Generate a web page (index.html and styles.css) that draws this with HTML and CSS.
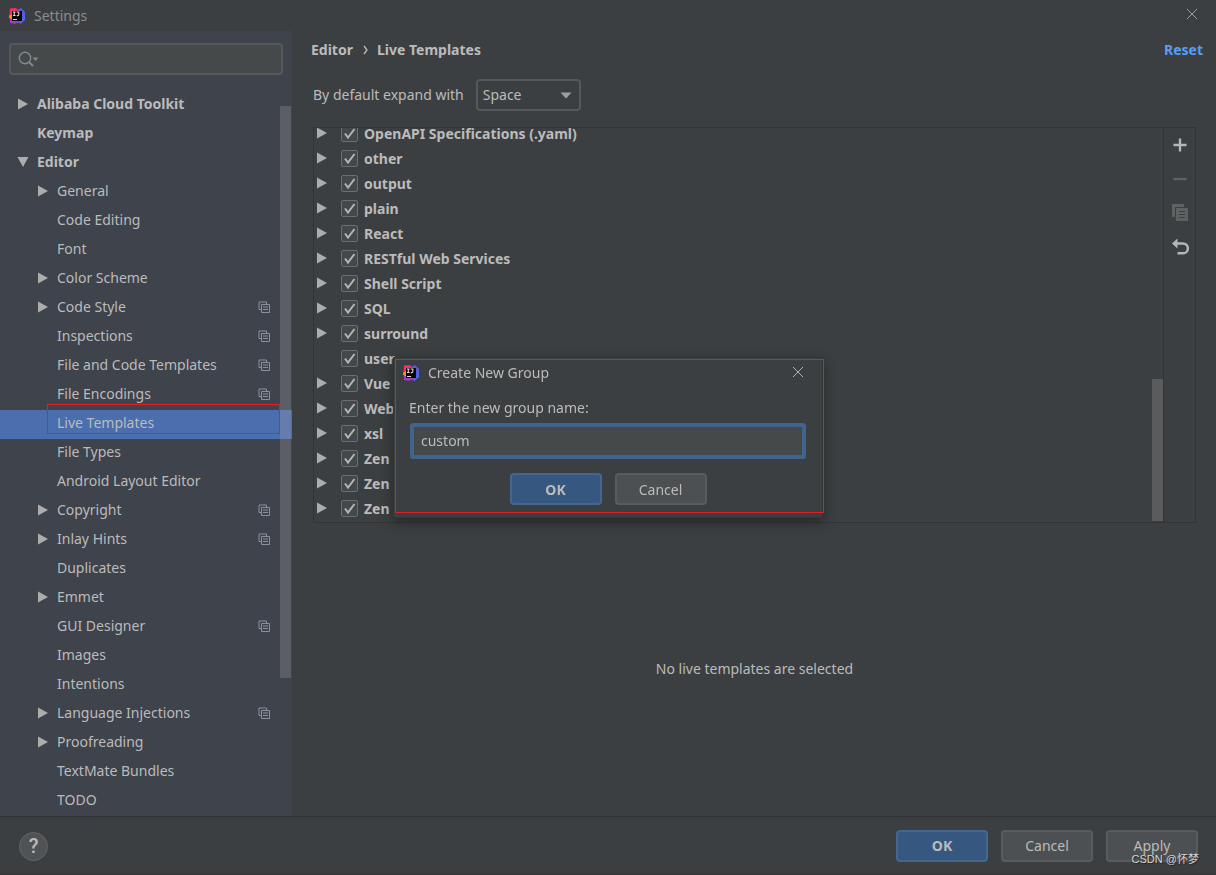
FILE: index.html
```html
<!DOCTYPE html>
<html lang="en">
<head>
<meta charset="utf-8">
<title>Settings</title>
<link rel="stylesheet" href="styles.css">
</head>
<body>
<svg class="sprite" aria-hidden="true">
  <defs>
    <linearGradient id="g-red" x1="0" y1="0" x2="1" y2="1"><stop offset="0" stop-color="#ff2f63"/><stop offset="1" stop-color="#e0218a"/></linearGradient>
    <linearGradient id="g-blue" x1="0" y1="0" x2="1" y2="1"><stop offset="0" stop-color="#3b6cf0"/><stop offset=".5" stop-color="#6a4fd8"/><stop offset="1" stop-color="#2f7bf5"/></linearGradient>
  </defs>
  <symbol id="logo" viewBox="0 0 16 16">
    <path d="M8 2.500 12 0l4 4v8l-4.500 4L7 13z" fill="url(#g-blue)"/>
    <path d="M1.200 10 .8 15l5 .8 6-1.800L6 8z" fill="#a23bc0"/>
    <path d="M1 .5 7 0l4 4-5 6H2L.6 6z" fill="url(#g-red)"/>
    <path d="M0 7.500 3 6v5.500L.2 10z" fill="#fb8b1a"/>
    <path d="M3 3h10v10H3z" fill="#050505"/>
    <path d="M4 4h2.600M5.300 4v3.600M4 7.500h2.600M7.600 4h2.200v2.700q0 .9-1 .9h-1" fill="none" stroke="#ddd" stroke-width="1.100"/>
    <path d="M4 11h4v1H4z" fill="#ddd"/>
  </symbol>
  <symbol id="close" viewBox="0 0 12 12"><path d="M1 1l10 10M11 1 1 11" fill="none" stroke="currentColor"/></symbol>
  <symbol id="right" viewBox="0 0 12 12"><path d="M1 .5v11L11 6z" fill="currentColor"/></symbol>
  <symbol id="down" viewBox="0 0 12 12"><path d="M.5 1h11L6 11z" fill="currentColor"/></symbol>
  <symbol id="copy" viewBox="0 0 12 12"><path d="M3 8.500H1V1h7.500v2" fill="none" stroke="currentColor"/><path d="M3.500 3.500h8v8h-8zM5 6h5M5 8.500h5" fill="none" stroke="currentColor"/></symbol>
</svg>

<div class="window">
  <header class="titlebar">
    <svg class="logo"><use href="#logo"/></svg>
    <h1 class="titlebar-text">Settings</h1>
    <button class="close" aria-label="Close settings"><svg><use href="#close"/></svg></button>
  </header>

  <div class="body">
    <aside class="sidebar">
      <div class="search">
        <svg viewBox="0 0 22 16" aria-hidden="true"><circle cx="7" cy="7" r="5.700" fill="none" stroke="currentColor" stroke-width="1.400"/><path d="m11 11 4 4" stroke="currentColor" stroke-width="1.800"/><path d="M14.500 6.500h6l-3 3.500z" fill="currentColor"/></svg>
        <input type="text" aria-label="Search settings">
      </div>
      <ul class="tree">
        <li class="row top"><svg class="arrow"><use href="#right"/></svg>Alibaba Cloud Toolkit</li>
        <li class="row top"><span class="arrow"></span>Keymap</li>
        <li class="row top"><svg class="arrow"><use href="#down"/></svg>Editor</li>
        <li class="row"><svg class="arrow"><use href="#right"/></svg>General</li>
        <li class="row"><span class="arrow"></span>Code Editing</li>
        <li class="row"><span class="arrow"></span>Font</li>
        <li class="row"><svg class="arrow"><use href="#right"/></svg>Color Scheme</li>
        <li class="row"><svg class="arrow"><use href="#right"/></svg>Code Style<svg class="scope"><use href="#copy"/></svg></li>
        <li class="row"><span class="arrow"></span>Inspections<svg class="scope"><use href="#copy"/></svg></li>
        <li class="row"><span class="arrow"></span>File and Code Templates<svg class="scope"><use href="#copy"/></svg></li>
        <li class="row"><span class="arrow"></span>File Encodings<svg class="scope"><use href="#copy"/></svg></li>
        <li class="row selected"><span class="arrow"></span>Live Templates<span class="highlight"></span></li>
        <li class="row"><span class="arrow"></span>File Types</li>
        <li class="row"><span class="arrow"></span>Android Layout Editor</li>
        <li class="row"><svg class="arrow"><use href="#right"/></svg>Copyright<svg class="scope"><use href="#copy"/></svg></li>
        <li class="row"><svg class="arrow"><use href="#right"/></svg>Inlay Hints<svg class="scope"><use href="#copy"/></svg></li>
        <li class="row"><span class="arrow"></span>Duplicates</li>
        <li class="row"><svg class="arrow"><use href="#right"/></svg>Emmet</li>
        <li class="row"><span class="arrow"></span>GUI Designer<svg class="scope"><use href="#copy"/></svg></li>
        <li class="row"><span class="arrow"></span>Images</li>
        <li class="row"><span class="arrow"></span>Intentions</li>
        <li class="row"><svg class="arrow"><use href="#right"/></svg>Language Injections<svg class="scope"><use href="#copy"/></svg></li>
        <li class="row"><svg class="arrow"><use href="#right"/></svg>Proofreading</li>
        <li class="row"><span class="arrow"></span>TextMate Bundles</li>
        <li class="row"><span class="arrow"></span>TODO</li>
      </ul>
      <div class="thumb side-thumb"></div>
    </aside>

    <main class="main">
      <div class="crumbs">
        <span>Editor</span>
        <svg class="crumb-sep" viewBox="0 0 6 10" aria-hidden="true"><path d="m2 1 3 4-3 4" fill="none" stroke="currentColor" stroke-width="1.300"/></svg>
        <span>Live Templates</span>
        <a class="reset" href="#">Reset</a>
      </div>
      <div class="expand">
        <label for="expand">By default expand with</label>
        <div class="select">
          <select id="expand"><option>Space</option><option>Tab</option><option>Enter</option></select>
          <svg viewBox="0 0 12 7" aria-hidden="true"><path d="M.5.500h11L6 6.500z" fill="currentColor"/></svg>
        </div>
      </div>
      <section class="templates">
        <div class="list">
          <ul class="groups">
            <li class="group"><svg class="arrow"><use href="#right"/></svg><label><input type="checkbox" checked>OpenAPI Specifications (.yaml)</label></li>
            <li class="group"><svg class="arrow"><use href="#right"/></svg><label><input type="checkbox" checked>other</label></li>
            <li class="group"><svg class="arrow"><use href="#right"/></svg><label><input type="checkbox" checked>output</label></li>
            <li class="group"><svg class="arrow"><use href="#right"/></svg><label><input type="checkbox" checked>plain</label></li>
            <li class="group"><svg class="arrow"><use href="#right"/></svg><label><input type="checkbox" checked>React</label></li>
            <li class="group"><svg class="arrow"><use href="#right"/></svg><label><input type="checkbox" checked>RESTful Web Services</label></li>
            <li class="group"><svg class="arrow"><use href="#right"/></svg><label><input type="checkbox" checked>Shell Script</label></li>
            <li class="group"><svg class="arrow"><use href="#right"/></svg><label><input type="checkbox" checked>SQL</label></li>
            <li class="group"><svg class="arrow"><use href="#right"/></svg><label><input type="checkbox" checked>surround</label></li>
            <li class="group"><span class="arrow"></span><label><input type="checkbox" checked>user</label></li>
            <li class="group"><svg class="arrow"><use href="#right"/></svg><label><input type="checkbox" checked>Vue</label></li>
            <li class="group"><svg class="arrow"><use href="#right"/></svg><label><input type="checkbox" checked>Web</label></li>
            <li class="group"><svg class="arrow"><use href="#right"/></svg><label><input type="checkbox" checked>xsl</label></li>
            <li class="group"><svg class="arrow"><use href="#right"/></svg><label><input type="checkbox" checked>Zen</label></li>
            <li class="group"><svg class="arrow"><use href="#right"/></svg><label><input type="checkbox" checked>Zen</label></li>
            <li class="group"><svg class="arrow"><use href="#right"/></svg><label><input type="checkbox" checked>Zen</label></li>
          </ul>
          <div class="thumb list-thumb"></div>
        </div>
        <div class="tools">
          <button aria-label="Add"><svg viewBox="0 0 18 18"><path d="M9 2.500v13M2.500 9h13" stroke="currentColor" stroke-width="2.400"/></svg></button>
          <button aria-label="Remove" disabled><svg viewBox="0 0 18 18"><path d="M2.500 9h13" stroke="currentColor" stroke-width="2.400"/></svg></button>
          <button aria-label="Duplicate" disabled><svg viewBox="0 0 18 18"><path d="M1 0h12v3H4v10H1z" fill="currentColor"/><path d="M5 4h12v13H5z" fill="currentColor"/><path d="M8 7.500h6M8 10.500h6M8 13.500h6" stroke="#3c3f41"/></svg></button>
          <button aria-label="Restore defaults"><svg viewBox="0 0 18 18"><path d="M5 5.500h7a4.900 4.900 0 0 1 0 9.800H6.500" fill="none" stroke="currentColor" stroke-width="2.500"/><path d="M1 5.500 6.500.500v10z" fill="currentColor"/></svg></button>
        </div>
      </section>
      <p class="empty">No live templates are selected</p>
    </main>
  </div>

  <footer class="footer">
    <button class="help" aria-label="Help">?</button>
    <div class="actions">
      <button class="btn primary">OK</button>
      <button class="btn">Cancel</button>
      <button class="btn">Apply</button>
    </div>
    <span class="watermark">CSDN @怀梦</span>
  </footer>
</div>

<div class="dialog" role="dialog" aria-labelledby="dialog-title">
  <div class="dialog-head">
    <svg class="logo"><use href="#logo"/></svg>
    <h2 id="dialog-title" class="dialog-title">Create New Group</h2>
    <button class="close" aria-label="Close dialog"><svg><use href="#close"/></svg></button>
  </div>
  <label class="dialog-label" for="group">Enter the new group name:</label>
  <input class="dialog-input" id="group" type="text" value="custom">
  <div class="dialog-actions">
    <button class="btn primary">OK</button>
    <button class="btn">Cancel</button>
  </div>
  <span class="dialog-frame"></span>
</div>
</body>
</html>
```
FILE: styles.css
```css
* { box-sizing: border-box; }

body {
  margin: 0;
  background: #3c3f41;
  color: #bbbbbb;
  font: 14px/20px "Noto Sans", "Noto Sans CJK SC", sans-serif;
}

button, input, select { font: inherit; color: inherit; }
button { padding: 0; border: 0; background: none; }
ul { margin: 0; padding: 0; list-style: none; }
svg { display: block; flex: none; }
.sprite { position: absolute; width: 0; height: 0; }

.window { display: flex; flex-direction: column; height: 100vh; }

.titlebar {
  display: flex;
  align-items: center;
  gap: 9px;
  height: 31px;
  padding: 0 18px 0 9px;
  flex: none;
}
.logo { width: 16px; height: 16px; }
.titlebar-text { margin: 0; font-size: 14px; font-weight: 400; color: #8a8c8d; }
.close { margin-left: auto; padding-bottom: 3px; color: #9a9c9d; }
.close svg { width: 12px; height: 12px; }

.body { display: flex; flex: 1; min-height: 0; }

.sidebar {
  position: relative;
  width: 292px;
  flex: none;
  padding-top: 12px;
  background: #3f434c;
  overflow: hidden;
}
.search {
  display: flex;
  align-items: center;
  height: 32px;
  margin: 0 9px 16px;
  padding-left: 7px;
  border: 2px solid #56595b;
  border-radius: 4px;
  background: #45494a;
  color: #7f8b91;
}
.search svg { width: 22px; height: 16px; }
.search input { flex: 1; min-width: 0; border: 0; outline: 0; background: none; color: #bbbbbb; }

.row {
  position: relative;
  display: flex;
  align-items: center;
  gap: 8px;
  height: 29px;
  padding: 0 22px 3px 37px;
}
.row.top { padding-left: 17px; font-weight: 700; }
.arrow { width: 12px; height: 12px; flex: none; color: #adadad; }
.scope { width: 12px; height: 12px; margin-left: auto; color: #87939a; }
.selected { background: #4b6eaf; }
.highlight {
  position: absolute;
  top: -6px;
  left: 47px;
  right: 12px;
  height: 30px;
  border: 1px solid #e41e26;
}
.thumb { position: absolute; width: 11px; background: rgba(166, 166, 166, 0.28); }
.side-thumb { top: 75px; right: 1px; height: 572px; }

.main { display: flex; flex-direction: column; flex: 1; min-width: 0; padding: 9px 20px 0 21px; }
.crumbs {
  display: flex;
  align-items: center;
  gap: 9px;
  margin: 0 -7px 0 -2px;
  font-weight: 700;
}
.crumb-sep { width: 6px; height: 10px; }
.reset { margin-left: auto; color: #589df6; text-decoration: none; }
.expand { display: flex; align-items: center; gap: 12px; margin: 19px 0 16px; }
.select { position: relative; }
.select select {
  display: block;
  width: 105px;
  height: 32px;
  padding: 0 5px;
  border: 2px solid #56595b;
  border-radius: 4px;
  background: #3c3f41;
  appearance: none;
}
.select svg {
  position: absolute;
  right: 9px;
  top: 13px;
  width: 12px;
  height: 7px;
  color: #9da0a2;
  pointer-events: none;
}

.templates { display: flex; height: 396px; flex: none; border: 1px solid #323435; }
.list { position: relative; flex: 1; overflow: hidden; }
.groups { margin-top: -7px; }
.group { display: flex; align-items: center; gap: 13px; height: 25px; padding-left: 2px; font-weight: 700; }
.group .arrow { margin-bottom: 1px; }
.group label { display: flex; align-items: center; gap: 6px; }
.group input {
  width: 17px;
  height: 17px;
  margin: 0;
  border: 1px solid #6b6e70;
  border-radius: 2px;
  background: #43494a url("data:image/svg+xml,%3Csvg xmlns='http://www.w3.org/2000/svg' viewBox='0 0 15 15'%3E%3Cpath d='M3 7.500 6 11.500 12.500 3' fill='none' stroke='%23b4b4b4' stroke-width='2'/%3E%3C/svg%3E") center / 15px 15px;
  appearance: none;
}
.list-thumb { right: 0; bottom: 1px; height: 142px; background: #5a5b5c; }
.tools {
  display: flex;
  flex-direction: column;
  align-items: center;
  gap: 16px;
  width: 32px;
  padding-top: 8px;
  border-left: 1px solid #323435;
  color: #b4b6b7;
}
.tools button { width: 18px; height: 18px; }
.tools button:disabled { color: #5f6263; }
.tools svg { width: 18px; height: 18px; }
.empty { display: flex; flex: 1; align-items: center; justify-content: center; margin: 0 0 2px; }

.footer {
  position: relative;
  display: flex;
  align-items: center;
  justify-content: space-between;
  height: 59px;
  flex: none;
  padding: 0 18px 0 19px;
  border-top: 1px solid #303233;
  border-bottom: 1px solid #333536;
}
.help {
  width: 29px;
  height: 29px;
  margin-top: 2px;
  border: 1px solid #636668;
  border-radius: 50%;
  background: #4f5355;
  font: 500 20px/27px Roboto, sans-serif;
}
.actions, .dialog-actions { display: flex; gap: 13px; }
.btn {
  width: 92px;
  height: 32px;
  padding-top: 1px;
  border: 2px solid #585c5e;
  border-radius: 4px;
  background: #4c5052;
}
.btn.primary { border-color: #42688f; background: #365880; font-weight: 700; }
.watermark {
  position: absolute;
  right: 17px;
  bottom: 7px;
  color: #d4d4d4;
  font: 11px/16px "Liberation Sans", "Noto Sans CJK SC", sans-serif;
  text-shadow: 1px 1px 1px #222222;
}

.dialog {
  position: fixed;
  inset: 0;
  width: 430px;
  height: 161px;
  margin: auto;
  padding: 5px 16px 0;
  border: 1px solid #333637;
  background: #3c3f41;
  box-shadow: 0 4px 12px rgba(0, 0, 0, 0.4);
}
.dialog-head { display: flex; align-items: center; gap: 9px; height: 20px; margin: 0 2px 0 -7px; }
.dialog-title { margin: 0; font-size: 14px; font-weight: 400; }
.dialog-head .close { color: #b0b2b3; }
.dialog-label { display: block; margin: 15px 0 5px -1px; }
.dialog-input {
  display: block;
  width: 100%;
  height: 36px;
  padding: 0 7px 1px;
  border: 4px solid #3f658d;
  border-radius: 3px;
  outline: 0;
  background: #45494a;
}
.dialog-actions { justify-content: center; margin-top: 14px; }
.dialog-frame {
  position: absolute;
  inset: 1px -2px 4px 1px;
  border: 1px solid #e41e26;
  pointer-events: none;
}
```
